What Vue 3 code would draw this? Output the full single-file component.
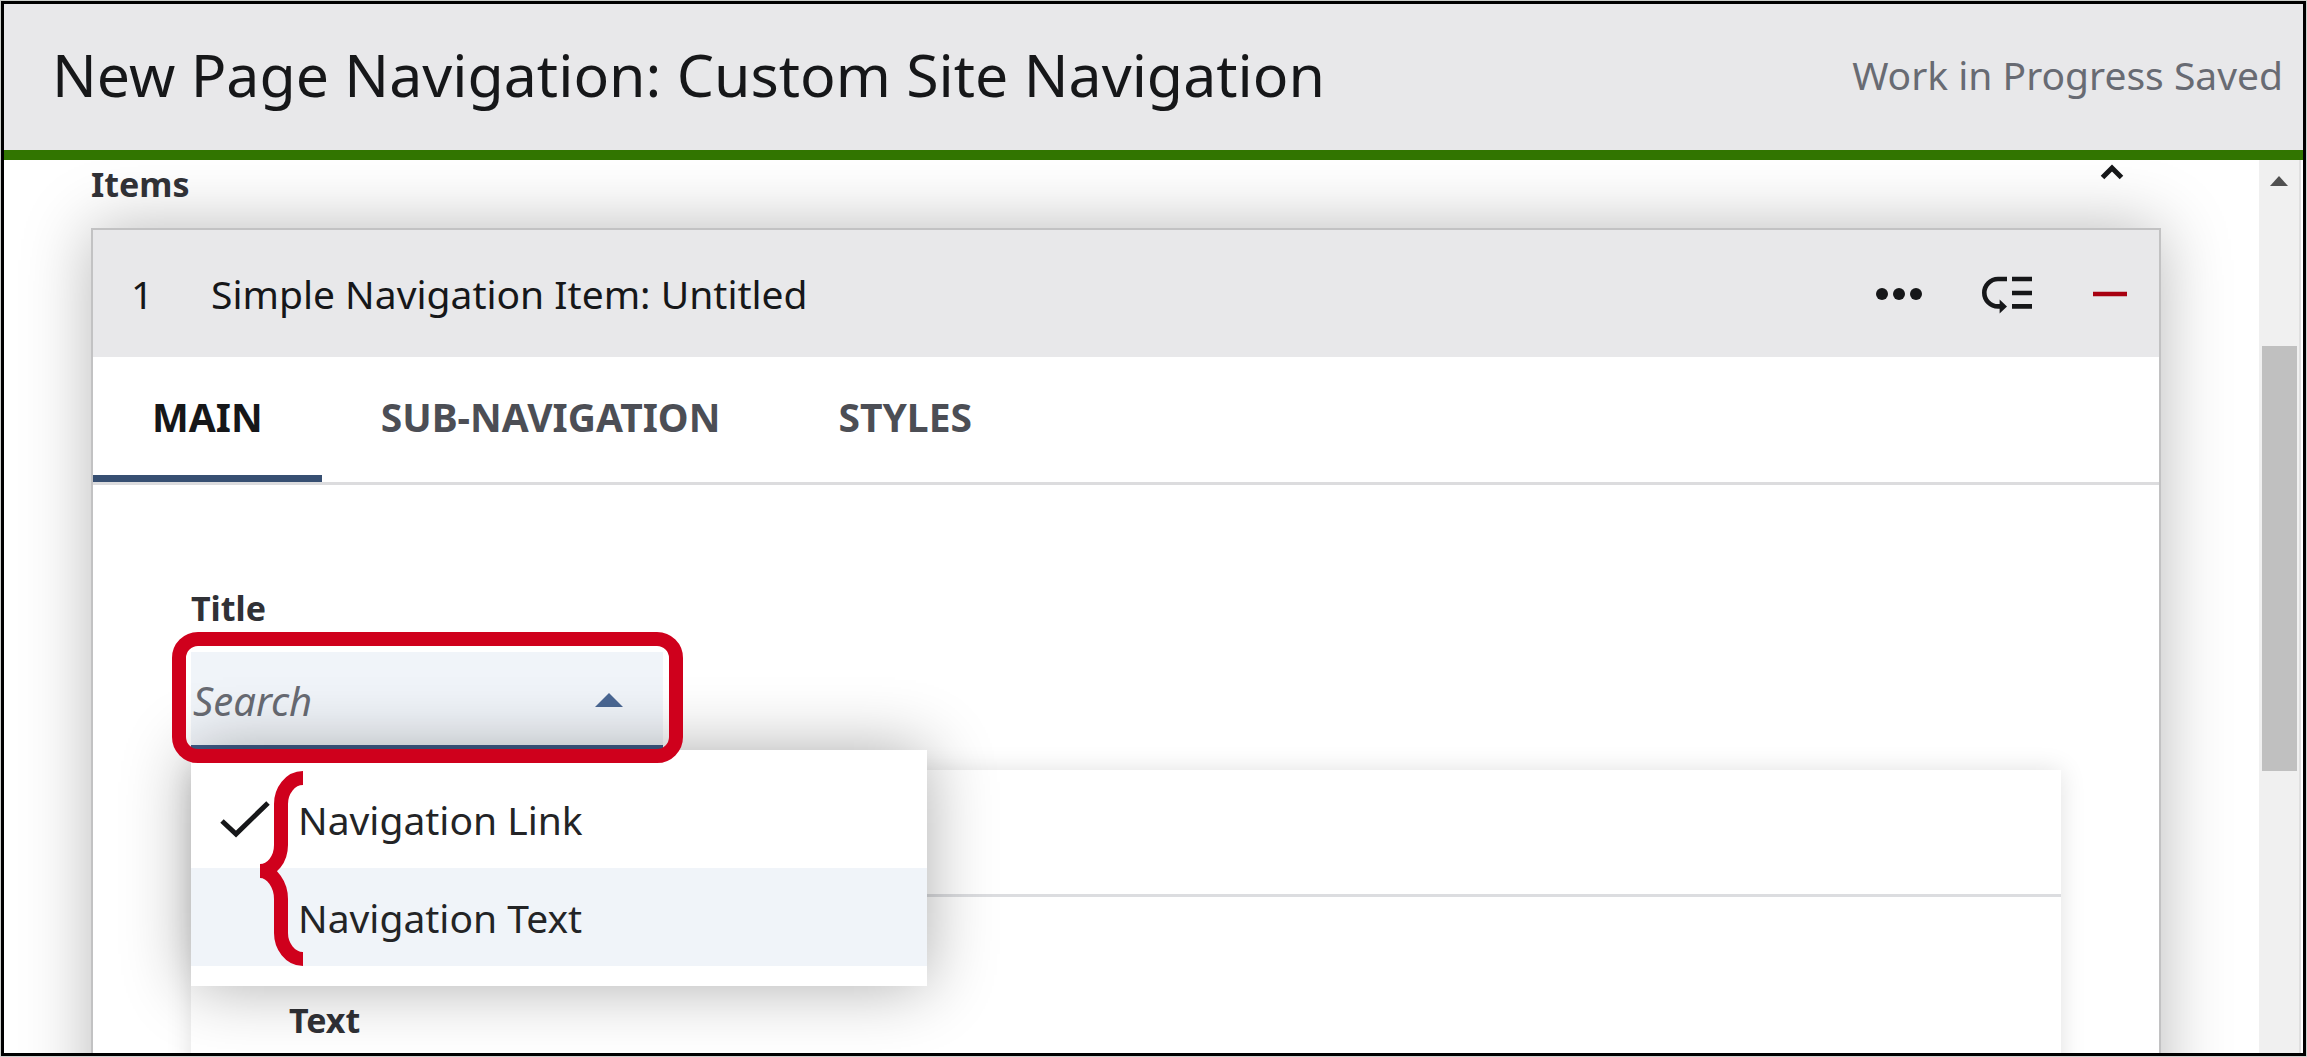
<script setup>
import { ref } from 'vue'

const tabs = ['MAIN', 'SUB-NAVIGATION', 'STYLES']
const activeTab = ref('MAIN')

const options = ['Navigation Link', 'Navigation Text']
const selected = ref('Navigation Link')
const highlighted = ref('Navigation Text')
const query = ref('')

const scroll = { top: 20.8, size: 47.6 }
</script>

<template>
  <div class="frame">
    <header class="page-header">
      <h1>New Page Navigation: Custom Site Navigation</h1>
      <span class="status">Work in Progress Saved</span>
    </header>

    <div class="viewport">
      <main class="content">
        <div class="section-head">
          <h2>Items</h2>
          <button class="icon-btn collapse" type="button" aria-label="Collapse items">
            <svg width="24" height="24" viewBox="0 0 24 24">
              <path d="M2.5 17.5 12 8 21.5 17.5" fill="none" stroke="#161719" stroke-width="5" />
            </svg>
          </button>
        </div>

        <section class="card">
          <div class="card-head">
            <span class="index">1</span>
            <span class="card-title">Simple Navigation Item: Untitled</span>
            <button class="icon-btn" type="button" aria-label="More actions">
              <svg width="48" height="36" viewBox="0 0 48 36">
                <g fill="#161719">
                  <circle cx="7" cy="18" r="6" />
                  <circle cx="24" cy="18" r="6" />
                  <circle cx="41" cy="18" r="6" />
                </g>
              </svg>
            </button>
            <button class="icon-btn move" type="button" aria-label="Move item">
              <svg width="52" height="40" viewBox="0 0 52 40">
                <g fill="none" stroke="#161719" stroke-width="4.6">
                  <path d="M26 5H17A13.7 13.7 0 0 0 17 32.4H20" />
                  <path d="M31 5h20M31 19h20M31 32.4h20" />
                </g>
                <path d="M18.6 25.4 26 32.4 18.6 39.4Z" fill="#161719" />
              </svg>
            </button>
            <button class="icon-btn remove" type="button" aria-label="Remove item">
              <svg width="36" height="36" viewBox="0 0 36 36">
                <path d="M1 18H35" stroke="#a80010" stroke-width="4.6" />
              </svg>
            </button>
          </div>

          <nav class="tabs" role="tablist">
            <button
              v-for="tab in tabs"
              :key="tab"
              type="button"
              role="tab"
              class="tab"
              :class="{ active: tab === activeTab }"
              :aria-selected="tab === activeTab"
              @click="activeTab = tab"
            >{{ tab }}</button>
          </nav>

          <div class="panel">
            <label class="field-label" for="title-type">Title</label>
            <div class="combo">
              <input id="title-type" v-model="query" class="combo-input" type="text" placeholder="Search" role="combobox" aria-expanded="true" aria-controls="title-options" />
              <svg class="caret" width="28" height="14" viewBox="0 0 28 14">
                <path d="M0 14 14 0 28 14Z" fill="#4a6793" />
              </svg>
              <div id="title-options" class="menu" role="listbox">
                <button
                  v-for="option in options"
                  :key="option"
                  type="button"
                  role="option"
                  class="option"
                  :class="{ highlighted: option === highlighted }"
                  :aria-selected="option === selected"
                  @mouseenter="highlighted = option"
                  @click="selected = option"
                >
                  <svg class="check" width="51" height="40" viewBox="0 0 51 40">
                    <path v-if="option === selected" d="M3 22 17 35 49 4" fill="none" stroke="#161719" stroke-width="5" />
                  </svg>
                  <span>{{ option }}</span>
                </button>
                <svg class="brace" width="43" height="195" viewBox="0 0 43 195">
                  <path d="M43 7C30 7 21 20 21 33V74C21 88 12 100 0 100C12 100 21 114 21 128V162C21 175 30 188 43 188" fill="none" stroke="#cf001c" stroke-width="14" />
                </svg>
              </div>
              <div class="callout"></div>
            </div>

            <section class="nested">
              <div class="nested-head"></div>
              <div class="nested-body">
                <h3 class="field-label">Text</h3>
              </div>
            </section>
          </div>
        </section>
      </main>

      <div class="scrollbar">
        <svg class="arrow" width="18" height="10" viewBox="0 0 18 10">
          <path d="M0 10 9 0 18 10Z" fill="#505050" />
        </svg>
        <div class="thumb" :style="{ top: scroll.top + '%', height: scroll.size + '%' }"></div>
      </div>
    </div>
  </div>
</template>

<style>
body {
  margin: 0;
  background: #cdd0cd;
}
</style>

<style scoped>
.frame {
  box-sizing: border-box;
  height: calc(100vh - 2px);
  margin: 1px;
  border: 3px solid #000;
  display: flex;
  flex-direction: column;
  overflow: hidden;
  background: #fff;
  color: #161719;
  font-family: "Noto Sans", "Open Sans", sans-serif;
  font-size: 39px;
}

h1,
h2,
h3 {
  margin: 0;
}

button,
input {
  font: inherit;
  color: inherit;
}

button {
  border: 0;
  padding: 0;
  background: none;
  cursor: pointer;
}

.page-header {
  box-sizing: border-box;
  flex: none;
  height: 156px;
  padding: 0 20px 6px 48px;
  display: flex;
  align-items: center;
  justify-content: space-between;
  background: #e8e8ea;
  border-bottom: 10px solid #317500;
}

.page-header h1 {
  font-size: 59px;
  font-weight: 400;
  line-height: 80px;
}

.status {
  color: #686b73;
}

.viewport {
  flex: 1;
  min-height: 0;
  display: flex;
}

.content {
  flex: 1;
  min-width: 0;
  padding: 0 98px 0 87px;
  overflow: hidden;
}

.section-head {
  height: 68px;
  display: flex;
  align-items: flex-start;
  justify-content: space-between;
  padding-right: 37px;
}

.section-head h2,
.field-label {
  display: block;
  font-size: 34px;
  font-weight: 700;
  line-height: 48px;
  color: #303136;
}

.icon-btn {
  display: flex;
}

.card {
  border: 2px solid #c2c2c3;
  background: #fff;
  box-shadow: 0 0 64px rgba(0, 0, 0, 0.28);
}

.card-head {
  height: 127px;
  padding: 0 31px 0 38px;
  display: flex;
  align-items: center;
  background: #e8e8ea;
}

.index {
  width: 80px;
}

.card-title {
  flex: 1;
}

.move {
  margin-left: 58px;
}

.remove {
  margin-left: 59px;
}

.tabs {
  display: flex;
  border-bottom: 3px solid #dcdcde;
}

.tab {
  height: 125px;
  padding: 0 59px;
  border-bottom: 7px solid transparent;
  font-weight: 700;
  color: #4c4e55;
}

.tab.active {
  color: #161719;
  border-bottom-color: #374f72;
}

.panel {
  padding: 99px 98px 0;
}

.combo {
  position: relative;
  width: 472px;
  margin-top: 20px;
}

.combo-input {
  display: block;
  box-sizing: border-box;
  width: 100%;
  height: 98px;
  margin: 0;
  padding: 4px 80px 0 2px;
  border: 0;
  border-bottom: 5px solid #3f5c87;
  border-radius: 0;
  outline: 0;
  background: #f0f4f9;
  font-size: 40px;
}

.combo-input::placeholder {
  color: #686b73;
  font-style: italic;
  opacity: 1;
}

.caret {
  position: absolute;
  top: 41px;
  right: 40px;
}

.menu {
  position: absolute;
  z-index: 1;
  top: 100%;
  left: 0;
  width: 736px;
  padding: 20px 0;
  background: #fff;
  box-shadow: 0 0 64px rgba(0, 0, 0, 0.32);
}

.option {
  width: 100%;
  height: 98px;
  padding-left: 28px;
  display: flex;
  align-items: center;
  gap: 28px;
  text-align: left;
  color: #232426;
}

.option.highlighted {
  background: #f0f4f9;
}

.brace {
  position: absolute;
  top: 21px;
  left: 69px;
}

.callout {
  position: absolute;
  z-index: 2;
  inset: -20px -20px -13px -19px;
  border: 14px solid #cf001c;
  border-radius: 26px;
  pointer-events: none;
}

.nested {
  margin-top: 20px;
  background: #fff;
  box-shadow: 0 0 24px rgba(0, 0, 0, 0.12);
}

.nested-head {
  height: 124px;
  border-bottom: 3px solid #dcdde0;
}

.nested-body {
  padding: 99px 98px;
}

.scrollbar {
  position: relative;
  width: 40px;
  margin-right: 2px;
  border-right: 2px solid #e0e0e0;
  background: #f0f0f0;
}

.arrow {
  display: block;
  margin: 16px auto 0 11px;
}

.thumb {
  position: absolute;
  left: 3px;
  right: 2px;
  background: #c0c0c0;
}
</style>
